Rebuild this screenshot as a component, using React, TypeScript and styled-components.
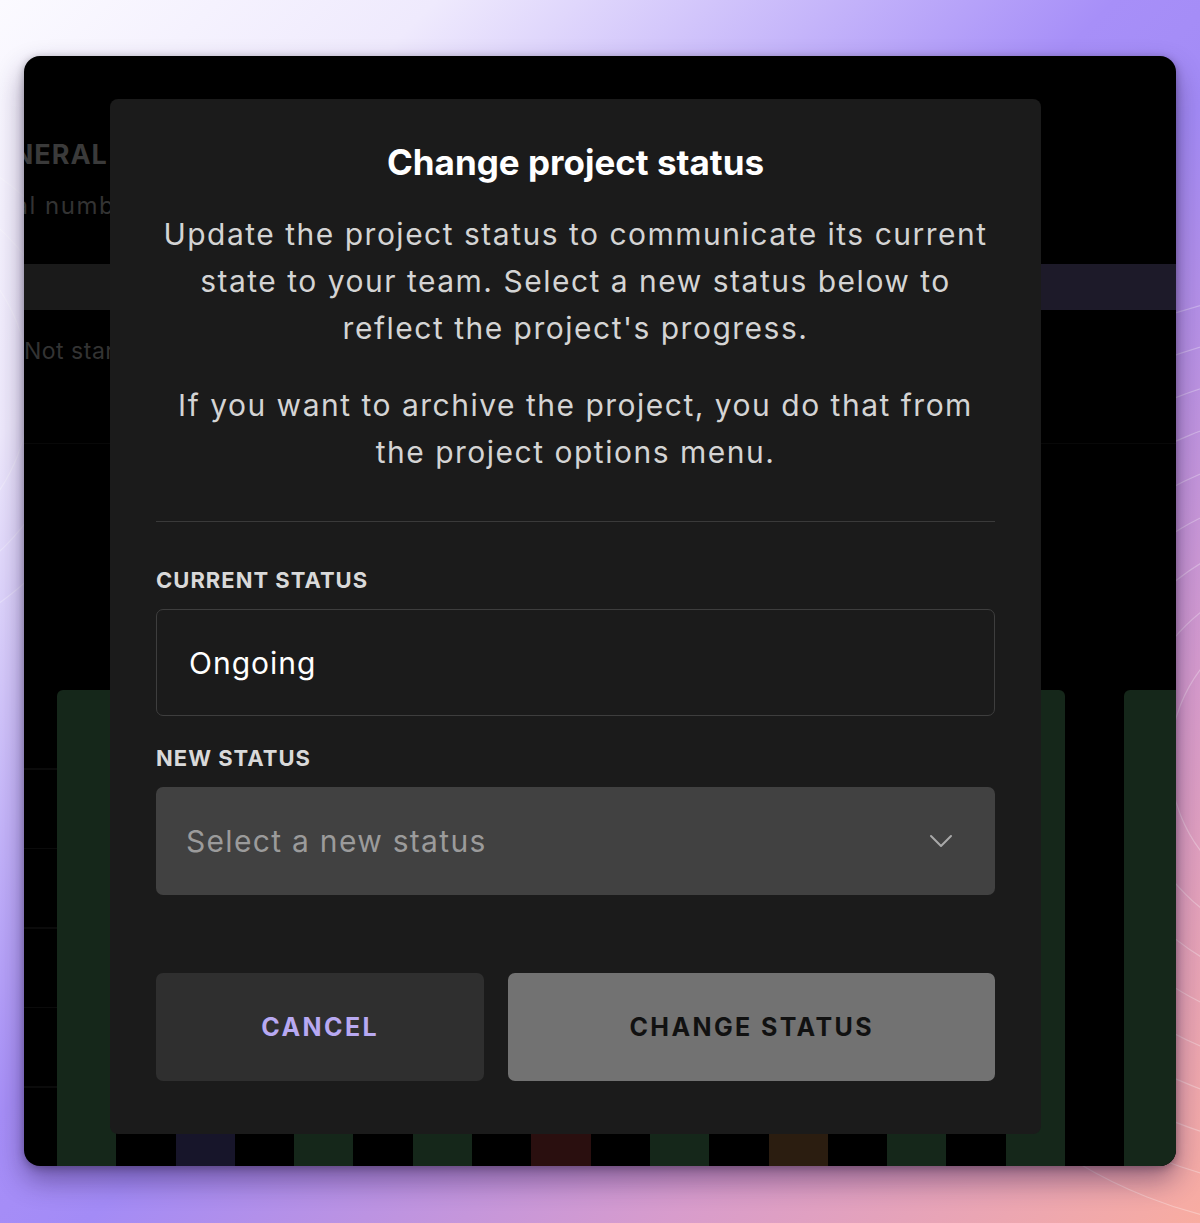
import React from 'react';
import styled, { createGlobalStyle } from 'styled-components';

const GlobalStyle = createGlobalStyle`
  * { box-sizing: border-box; }
  html, body { margin: 0; padding: 0; }
  body {
    font-family: Inter, "Noto Sans", sans-serif;
    background: #ffffff;
  }
`;

const columnColors = [
  '#15271a', '#000000', '#17152a', '#000000', '#15271a', '#000000',
  '#15271a', '#000000', '#2a0f0f', '#000000', '#15271a', '#000000',
  '#2b1d10', '#000000', '#15271a', '#000000', '#15271a', '#000000',
  '#15271a',
];

const App: React.FC = () => {
  return (
    <>
      <GlobalStyle />
      <Page>
        <Swirl viewBox='0 0 1200 1223' preserveAspectRatio='none'>
          {[110, 150, 190, 230, 270, 310, 350, 390, 430, 470].map((r) => (
            <circle key={r} cx='1320' cy='760' r={r} />
          ))}
          {[60, 100, 140, 180, 220, 260].map((r) => (
            <circle key={`l${r}`} cx='-150' cy='390' r={r} />
          ))}
        </Swirl>
        <Window>
          <Board>
            <SectionTitle>GENERAL</SectionTitle>
            <SectionMeta>Total number of tasks</SectionMeta>
            <HeaderBand>
              <HeaderCell />
            </HeaderBand>
            <StatusRow>Not started</StatusRow>
            <Spacer />
            <Columns>
              {columnColors.map((color, i) => (
                <Column key={i} $color={color} />
              ))}
            </Columns>
          </Board>

          <Modal>
            <Title>Change project status</Title>
            <Text>
              Update the project status to communicate its current state to
              your team. Select a new status below to reflect the project's
              progress.
            </Text>
            <Text>
              If you want to archive the project, you do that from the project
              options menu.
            </Text>
            <Divider />
            <Field>
              <Label>Current status</Label>
              <CurrentValue>Ongoing</CurrentValue>
            </Field>
            <Field>
              <Label>New status</Label>
              <SelectBox>
                <Placeholder>Select a new status</Placeholder>
                <svg width='24' height='14' viewBox='0 0 24 14' fill='none'>
                  <path
                    d='M2 2 L12 12 L22 2'
                    stroke='#a9a9a9'
                    strokeWidth='2'
                    strokeLinecap='round'
                    strokeLinejoin='round'
                  />
                </svg>
              </SelectBox>
            </Field>
            <Actions>
              <CancelButton>Cancel</CancelButton>
              <ConfirmButton>Change status</ConfirmButton>
            </Actions>
          </Modal>
        </Window>
      </Page>
    </>
  );
};

const Page = styled.div`
  position: relative;
  width: 1200px;
  height: 1223px;
  padding: 56px 24px 57px;
  overflow: hidden;
  background: linear-gradient(
    135deg,
    #fbfaff 0%,
    #efeafd 18%,
    #a78ff8 46%,
    #a38bf6 54%,
    #d89ccc 78%,
    #f8aca1 100%
  );
`;

const Swirl = styled.svg`
  position: absolute;
  inset: 0;
  width: 100%;
  height: 100%;
  fill: none;
  stroke: rgba(255, 255, 255, 0.3);
  stroke-width: 1.2;
`;

const Window = styled.div`
  position: relative;
  height: 1110px;
  border-radius: 16px;
  background: #000000;
  overflow: hidden;
  box-shadow: 0 14px 28px rgba(40, 20, 70, 0.45),
    0 2px 8px rgba(0, 0, 0, 0.3);
`;

const Board = styled.div`
  display: flex;
  flex-direction: column;
  height: 100%;
  margin-left: -50px;
  padding-top: 81px;
`;

const SectionTitle = styled.div`
  font-size: 27px;
  font-weight: 700;
  color: #3a3a3a;
  letter-spacing: 1px;
  line-height: 36px;
`;

const SectionMeta = styled.div`
  margin-top: 17px;
  font-size: 24px;
  letter-spacing: 1.5px;
  color: #333333;
  line-height: 31px;
`;

const HeaderBand = styled.div`
  display: flex;
  height: 46px;
  margin-top: 43px;
  background: #1d1a29;
`;

const HeaderCell = styled.div`
  width: 260px;
  background: #1a1a1a;
`;

const StatusRow = styled.div`
  height: 134px;
  padding: 27px 0 0 50px;
  font-size: 23px;
  letter-spacing: 0.5px;
  color: #333333;
  border-bottom: 1px solid #080808;
`;

const Spacer = styled.div`
  height: 246px;
`;

const Columns = styled.div`
  flex: 1;
  display: grid;
  grid-template-columns: repeat(19, 59.3px);
  padding-left: 83px;
  background-image: repeating-linear-gradient(
    to bottom,
    transparent 0px,
    transparent 78px,
    #0b0b0b 78px,
    #0b0b0b 79.5px
  );
`;

const Column = styled.div<{ $color: string }>`
  background: ${({ $color }) => $color};
  border-radius: 6px 6px 0 0;
`;

const Modal = styled.div`
  position: absolute;
  top: 43px;
  left: 86px;
  width: 931px;
  height: 1035px;
  padding: 40px 46px 0;
  background: #1b1b1b;
  border-radius: 8px;
  display: flex;
  flex-direction: column;
  align-items: stretch;
`;

const Title = styled.h2`
  margin: 0 0 26px;
  text-align: center;
  font-size: 35px;
  font-weight: 700;
  line-height: 46px;
  color: #ffffff;
`;

const Text = styled.p`
  margin: 0 0 30px;
  text-align: center;
  font-size: 30px;
  line-height: 47px;
  letter-spacing: 1.5px;
  color: #d4d4d4;
`;

const Divider = styled.div`
  height: 1px;
  margin: 15px 0 44px;
  background: #3a3a3a;
`;

const Field = styled.div`
  display: flex;
  flex-direction: column;
  gap: 15px;
  margin-bottom: 28px;
`;

const Label = styled.div`
  font-size: 22px;
  font-weight: 700;
  text-transform: uppercase;
  letter-spacing: 1px;
  line-height: 28px;
  color: #d9d9d9;
`;

const CurrentValue = styled.div`
  display: flex;
  align-items: center;
  height: 107px;
  padding: 0 32px;
  border: 1.5px solid #3e3e3e;
  border-radius: 7px;
  font-size: 30px;
  letter-spacing: 1px;
  color: #ffffff;
`;

const SelectBox = styled.div`
  display: flex;
  align-items: center;
  justify-content: space-between;
  height: 108px;
  padding: 0 42px 0 30px;
  border-radius: 7px;
  background: #414141;
`;

const Placeholder = styled.span`
  font-size: 30px;
  letter-spacing: 1.3px;
  color: #9b9b9b;
`;

const Actions = styled.div`
  display: flex;
  gap: 24px;
  margin-top: 50px;
`;

const ActionButton = styled.button`
  height: 108px;
  border: none;
  border-radius: 7px;
  font-family: Inter, "Noto Sans", sans-serif;
  font-size: 25px;
  font-weight: 700;
  text-transform: uppercase;
  letter-spacing: 2.4px;
  cursor: pointer;
`;

const CancelButton = styled(ActionButton)`
  flex: 2;
  background: #2f2f2f;
  color: #b8a9f2;
`;

const ConfirmButton = styled(ActionButton)`
  flex: 3;
  background: #727272;
  color: #111111;
`;

export default App;
